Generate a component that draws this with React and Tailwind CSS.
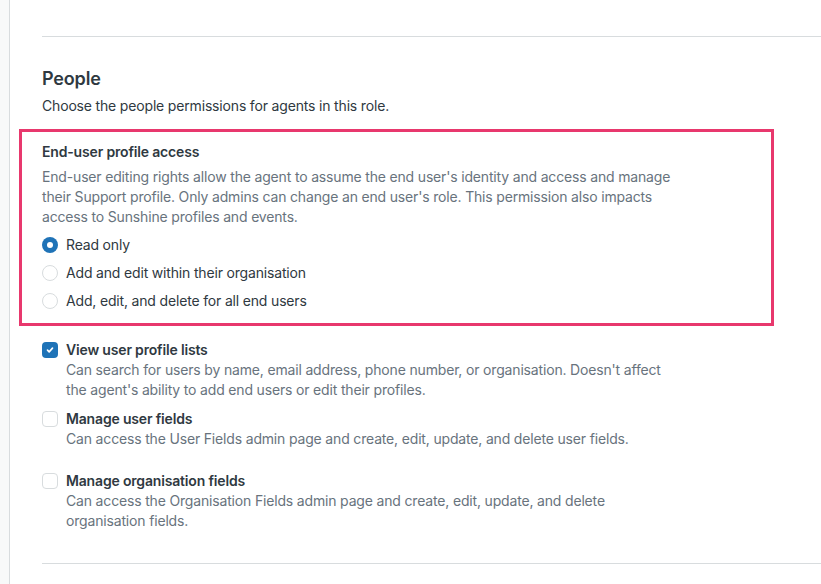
import { useState } from "react";

const radioOptions = [
  "Read only",
  "Add and edit within their organisation",
  "Add, edit, and delete for all end users",
];

function Radio({ checked, label, onClick }) {
  return (
    <label className="flex items-center h-5 cursor-pointer" onClick={onClick}>
      <span
        className={
          checked
            ? "w-4 h-4 rounded-full bg-[#1f73b7] flex items-center justify-center shrink-0"
            : "w-4 h-4 rounded-full border border-[#d8dcde] bg-white shrink-0"
        }
      >
        {checked && <span className="w-[6px] h-[6px] rounded-full bg-white" />}
      </span>
      <span className="ml-2 text-[14px] leading-5 text-[#2f3941]">{label}</span>
    </label>
  );
}

function Checkbox({ checked, title, children, onClick }) {
  return (
    <div className="flex">
      <span
        onClick={onClick}
        className={
          checked
            ? "w-4 h-4 mt-[2px] rounded-[4px] bg-[#1f73b7] flex items-center justify-center shrink-0 cursor-pointer"
            : "w-4 h-4 mt-[2px] rounded-[4px] border border-[#d8dcde] bg-white shrink-0 cursor-pointer"
        }
      >
        {checked && (
          <svg width="10" height="10" viewBox="0 0 12 12" fill="none">
            <path d="M3 6.2l2 2 4-4.4" stroke="white" strokeWidth="2" strokeLinecap="round" strokeLinejoin="round" />
          </svg>
        )}
      </span>
      <div className="ml-2">
        <p className="text-[14px] leading-5 font-semibold text-[#2f3941]">{title}</p>
        <p className="text-[14px] leading-5 text-[#68737d]">{children}</p>
      </div>
    </div>
  );
}

export default function App() {
  const [access, setAccess] = useState(0);
  const [checks, setChecks] = useState([true, false, false]);
  const toggle = (i) => setChecks(checks.map((c, j) => (j === i ? !c : c)));

  return (
    <div className="flex min-h-screen bg-white font-['Inter',sans-serif] tracking-[-0.17px]">
      <div className="w-[10px] shrink-0 bg-[#f8f9f9] border-r border-[#d8dcde]" />
      <div className="flex-1 pl-[32px] pt-[36px]">
        <div className="border-t border-[#d8dcde]" />

        <h2 className="mt-[30px] text-[18px] leading-6 font-semibold text-[#2f3941]">People</h2>
        <p className="mt-[5px] text-[14px] leading-5 text-[#2f3941]">
          Choose the people permissions for agents in this role.
        </p>

        <div className="mt-[13px] -ml-[23px] w-[755px] border-[3px] border-[#e8386d] pl-[20px] pt-[10px] pb-[12px]">
          <p className="text-[14px] leading-5 font-semibold text-[#2f3941]">End-user profile access</p>
          <p className="mt-[5px] text-[14px] leading-5 text-[#68737d]">
            End-user editing rights allow the agent to assume the end user's identity and access and manage
            <br />
            their Support profile. Only admins can change an end user's role. This permission also impacts
            <br />
            access to Sunshine profiles and events.
          </p>
          <div className="mt-[8px] flex flex-col gap-2">
            {radioOptions.map((label, i) => (
              <Radio key={label} label={label} checked={access === i} onClick={() => setAccess(i)} />
            ))}
          </div>
        </div>

        <div className="mt-[14px]">
          <Checkbox checked={checks[0]} onClick={() => toggle(0)} title="View user profile lists">
            Can search for users by name, email address, phone number, or organisation. Doesn't affect
            <br />
            the agent's ability to add end users or edit their profiles.
          </Checkbox>
        </div>
        <div className="mt-[9px]">
          <Checkbox checked={checks[1]} onClick={() => toggle(1)} title="Manage user fields">
            Can access the User Fields admin page and create, edit, update, and delete user fields.
          </Checkbox>
        </div>
        <div className="mt-[22px]">
          <Checkbox checked={checks[2]} onClick={() => toggle(2)} title="Manage organisation fields">
            Can access the Organisation Fields admin page and create, edit, update, and delete
            <br />
            organisation fields.
          </Checkbox>
        </div>

        <div className="mt-[32px] border-t border-[#d8dcde]" />
        <div className="h-10" />
      </div>
    </div>
  );
}
